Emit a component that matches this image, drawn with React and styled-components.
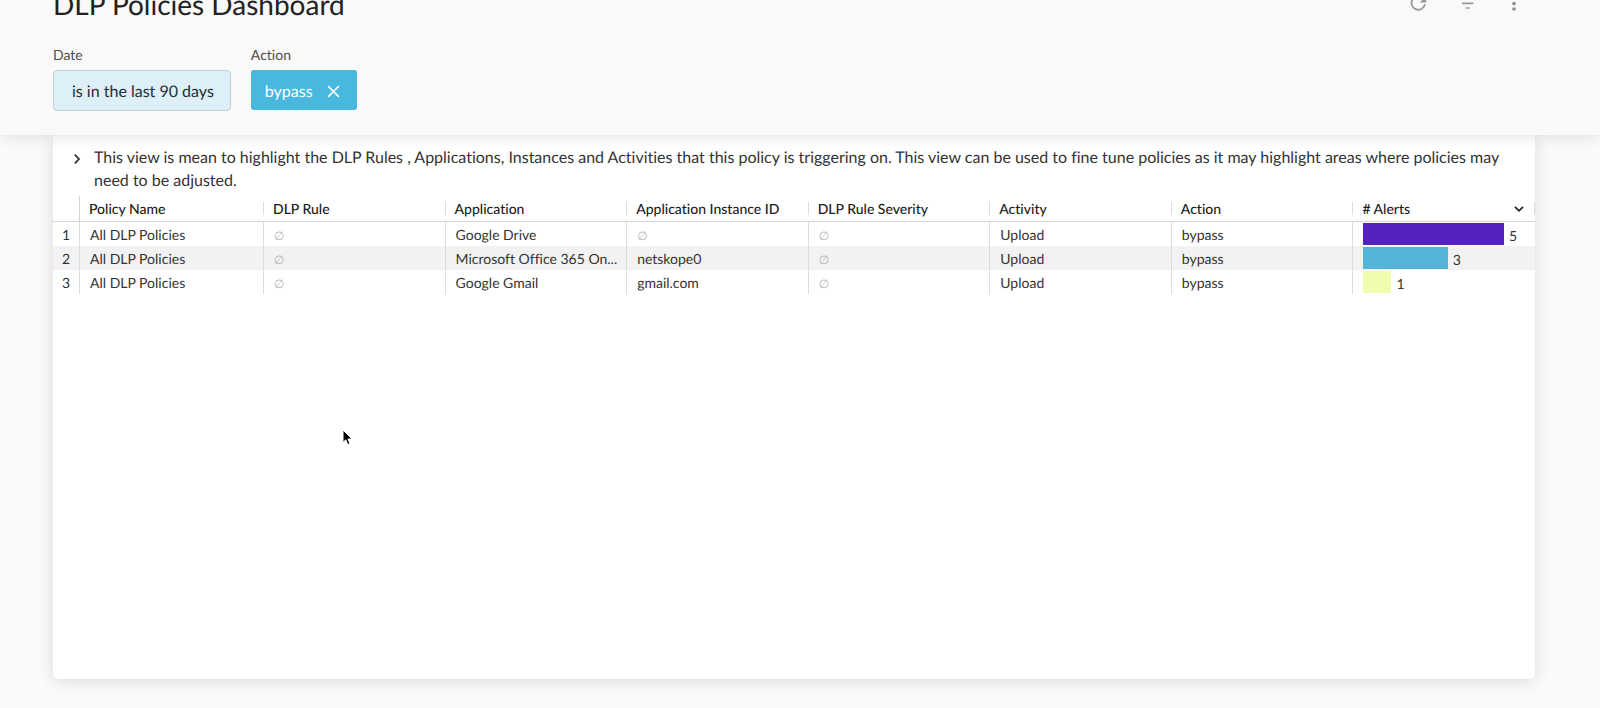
import React from 'react';
import styled, { createGlobalStyle } from "styled-components"


const columns = ['Policy Name', 'DLP Rule', 'Application', 'Application Instance ID', 'DLP Rule Severity', 'Activity', 'Action'];

const rows = [
  { cells: ['All DLP Policies', null, 'Google Drive', null, null, 'Upload', 'bypass'], alerts: 5, color: '#5423bf' },
  { cells: ['All DLP Policies', null, 'Microsoft Office 365 On...', 'netskope0', null, 'Upload', 'bypass'], alerts: 3, color: '#55b2d8' },
  { cells: ['All DLP Policies', null, 'Google Gmail', 'gmail.com', null, 'Upload', 'bypass'], alerts: 1, color: '#eefdae' },
];

const maxAlerts = 5;

const App = () => {
  return (
    <Page>
      <GlobalStyle/>
      <Header>
        <TitleRow>
          <Title>DLP Policies Dashboard</Title>
          <Tools>
            <IconButton aria-label="Reload">
              <svg width="20" height="20" viewBox="0 0 20 20" fill="none" stroke="#999" strokeWidth="1.8">
                <path d="M16 11.2A6.8 6.8 0 1 1 14.4 5.4"/>
                <path d="M17.2 3v6.6h-6.6z" fill="#999" stroke="none"/>
              </svg>
            </IconButton>
            <IconButton aria-label="Filters">
              <svg width="20" height="20" viewBox="0 0 20 20" fill="none" stroke="#999" strokeWidth="1.6">
                <path d="M2 5h17M5 10.4h11.4M8.6 15h4"/>
              </svg>
            </IconButton>
            <IconButton aria-label="More options">
              <svg width="20" height="20" viewBox="0 0 20 20" fill="#8c8c8c">
                <circle cx="9" cy="4.8" r="1.8"/>
                <circle cx="9" cy="10.6" r="1.8"/>
                <circle cx="9" cy="16" r="1.8"/>
              </svg>
            </IconButton>
          </Tools>
        </TitleRow>

        <Filters>
          <Filter>
            <FilterLabel id="date-label">Date</FilterLabel>
            <DateButton aria-describedby="date-label">is in the last 90 days</DateButton>
          </Filter>
          <Filter>
            <FilterLabel id="action-label">Action</FilterLabel>
            <Chip role="group" aria-labelledby="action-label">
              bypass
              <ChipClose aria-label="Remove bypass">
                <svg width="13" height="13" viewBox="0 0 14 14" fill="none" stroke="#fff" strokeWidth="1.6">
                  <path d="M1.2 1.2l11.6 11.6M12.8 1.2L1.2 12.8"/>
                </svg>
              </ChipClose>
            </Chip>
          </Filter>
        </Filters>
      </Header>

      <Card>
        <Note>
          <NoteToggle aria-label="Expand note">
            <svg width="8" height="12" viewBox="0 0 8 12" fill="none" stroke="#333" strokeWidth="1.8">
              <path d="M1.8 1.6L6 6l-4.2 4.4"/>
            </svg>
          </NoteToggle>
          <NoteText>
            This view is mean to highlight the DLP Rules , Applications, Instances and Activities that this policy is triggering on. This view can be used to fine tune policies as it may highlight areas where policies may need to be adjusted.
          </NoteText>
        </Note>

        <Table>
          <thead>
            <tr>
              <IndexHead/>
              {columns.map((name, i) => (
                <HeadCell key={name} $wide={i === 0}><HeadInner>{name}</HeadInner></HeadCell>
              ))}
              <HeadCell>
                <HeadInner>
                  # Alerts
                  <svg width="10" height="8" viewBox="0 0 10 8" fill="none" stroke="#222" strokeWidth="1.7">
                    <path d="M1 1.8l4 4 4-4"/>
                  </svg>
                </HeadInner>
              </HeadCell>
            </tr>
          </thead>
          <tbody>
            {rows.map((row, i) => (
              <Row key={i}>
                <IndexCell>{i + 1}</IndexCell>
                {row.cells.map((value, j) => (
                  <Cell key={j}>{value || <Empty>∅</Empty>}</Cell>
                ))}
                <BarCell>
                  <BarWrap>
                    <Bar $color={row.color} style={{ width: `${(row.alerts / maxAlerts) * 87}%` }}/>
                    <BarValue>{row.alerts}</BarValue>
                  </BarWrap>
                </BarCell>
              </Row>
            ))}
          </tbody>
        </Table>
      </Card>

      <Pointer width="11" height="17" viewBox="0 0 11 17">
        <path d="M1 1v12.4l2.8-2.6 2 4.8 2.2-1-2-4.6h4z" fill="#000" stroke="#fff" strokeWidth="1"/>
      </Pointer>
    </Page>
  )
}

const GlobalStyle = createGlobalStyle`
*{
  box-sizing:border-box;
}
body{
  margin:0;
  background:#f9fafc;
  font-family:Lato, sans-serif;
  font-variant-ligatures:none;
  text-rendering:geometricPrecision;
  color:#333;
}
button{
  font-family:inherit;
  text-rendering:inherit;
  cursor:pointer;
}
`

const Page = styled.div`
  display:flex;
  flex-direction:column;
  min-height:100vh;
  position:relative;
`;

const Header = styled.header`
  background:#f9f9f9;
  padding:0 65px 24px 53px;
  box-shadow:0 2px 14px rgba(0,0,0,0.11);
  z-index:1;
`;

// the title bar is scrolled half way out of the window
const TitleRow = styled.div`
  display:flex;
  justify-content:space-between;
  align-items:flex-end;
  height:21px;
  overflow:hidden;
`;

const Title = styled.h1`
  margin:0;
  font-size:28px;
  line-height:34px;
  font-weight:400;
  color:#222;
`;

const Tools = styled.div`
  display:flex;
  gap:28px;
  padding:0 10px 8px 0;
`;

const IconButton = styled.button`
  display:flex;
  padding:0;
  border:0;
  background:none;
`;

const Filters = styled.div`
  display:flex;
  gap:20px;
  padding-top:25px;
`;

const Filter = styled.div`
  display:flex;
  flex-direction:column;
  gap:6px;
`;

const FilterLabel = styled.span`
  font-size:14px;
  line-height:18px;
  color:#4c4c4c;
`;

const DateButton = styled.button`
  height:41px;
  padding:2px 16px 0 18px;
  border:1px solid #c3ced6;
  border-radius:4px;
  background:#ddeff7;
  font-size:16px;
  color:#262d33;
`;

const Chip = styled.div`
  display:flex;
  align-items:center;
  gap:14px;
  height:40px;
  padding:2px 17px 0 14px;
  border-radius:3px;
  background:#48b8df;
  font-size:16px;
  color:#fff;
`;

const ChipClose = styled.button`
  display:flex;
  padding:0;
  border:0;
  background:none;
`;

const Card = styled.main`
  flex:1;
  margin:0 65px 29px 53px;
  padding-top:11px;
  border-radius:0 0 5px 5px;
  background:#fff;
  box-shadow:0 2px 16px rgba(0,0,0,0.13);
`;

const Note = styled.div`
  display:flex;
  gap:13px;
  padding:0 30px 4px 20px;
`;

const NoteToggle = styled.button`
  display:flex;
  align-self:flex-start;
  padding:7px 0 0;
  border:0;
  background:none;
`;

const NoteText = styled.p`
  margin:0;
  font-size:16px;
  line-height:23px;
`;

const Table = styled.table`
  width:100%;
  table-layout:fixed;
  border-collapse:separate;
  border-spacing:0;
  font-size:14px;
`;

const IndexHead = styled.td`
  width:27px;
  height:26px;
  border-right:1px solid #d4d4d4;
  border-bottom:1px solid #d4d4d4;
`;

const HeadCell = styled.th`
  width:${({$wide})=>$wide ? '184px' : 'auto'};
  height:26px;
  padding:0;
  border-bottom:1px solid #d4d4d4;
  font-weight:500;
  text-align:left;
  color:#1c1c1c;
`;

const HeadInner = styled.div`
  display:flex;
  justify-content:space-between;
  align-items:center;
  height:13px;
  padding:0 10px 0 9px;
  border-right:1px solid #dcdcdc;
`;

const Row = styled.tr`
  height:24px;
  background:#fff;
  &:nth-child(even){
    background:#f2f2f2;
  }
`;

const Cell = styled.td`
  padding:2px 10px 0;
  border-right:1px solid #dcdcdc;
  overflow:hidden;
  white-space:nowrap;
  line-height:20px;
`;

const IndexCell = styled(Cell)`
  padding:2px 9px 0 0;
  text-align:right;
`;

const BarCell = styled(Cell)`
  padding:0 10px;
  border-right:0;
`;

const Empty = styled.span`
  font-size:12px;
  color:#b5b5b5;
`;

const BarWrap = styled.div`
  display:flex;
  align-items:center;
  gap:5px;
`;

const Bar = styled.div`
  height:22px;
  background:${({$color})=>$color};
`;

const BarValue = styled.span`
  padding-top:4px;
`;

const Pointer = styled.svg`
  position:absolute;
  left:342px;
  top:429px;
  z-index:2;
`;


export default App;
